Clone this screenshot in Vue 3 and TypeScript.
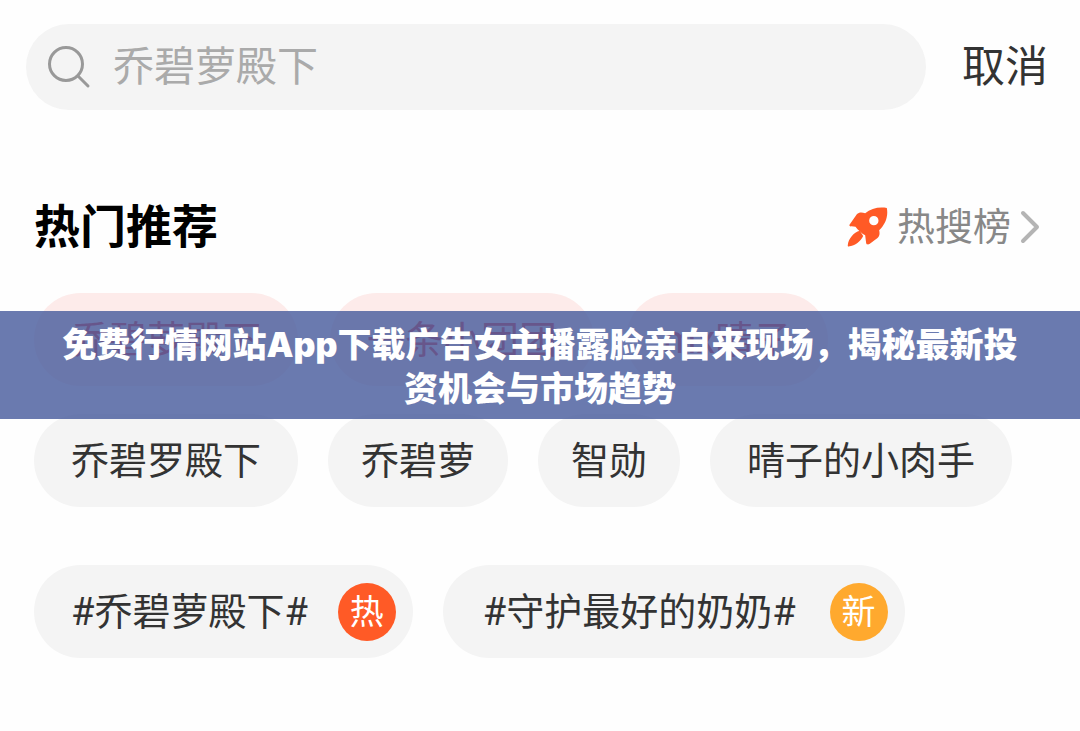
<script setup lang="ts">
interface Topic {
  label: string
  size?: 'compact' | 'roomy'
  badge?: string
  tone?: 'hot' | 'fresh'
}

const featured: Topic[] = [{ label: '乔碧萝殿下' }, { label: '一条小团团' }, { label: 'mx晴子' }]
const related: Topic[] = [
  { label: '乔碧罗殿下' },
  { label: '乔碧萝', size: 'compact' },
  { label: '智勋', size: 'compact' },
  { label: '晴子的小肉手' },
]
const hashtags: Topic[] = [
  { label: '#乔碧萝殿下#', badge: '热', tone: 'hot' },
  { label: '#守护最好的奶奶#', size: 'roomy', badge: '新', tone: 'fresh' },
]
</script>

<template>
  <main class="page">
    <form class="search" @submit.prevent>
      <label class="field">
        <svg class="lens" viewBox="0 0 44 44" aria-hidden="true">
          <circle cx="19" cy="19" r="16.5" />
          <path d="M31 31 41 41" />
        </svg>
        <input type="search" aria-label="搜索" placeholder="乔碧萝殿下" />
      </label>
      <button class="cancel" type="button">取消</button>
    </form>

    <header class="heading">
      <h2>热门推荐</h2>
      <a class="ranking" href="#ranking">
        <svg class="rocket" viewBox="80 80 122 120" aria-hidden="true">
          <path
            fill-rule="evenodd"
            d="M199 83C174 79 151 85 134 99C123 95 115 96 109 102L87 133C86 137 88 139 93 138L105 139C112 148 124 160 134 165L137 189C139 194 144 193 148 190L171 173C178 167 178 158 176 150C194 132 204 110 199 83ZM160 107A14 14 0 1 0 160 135A14 14 0 1 0 160 107Z"
          />
          <path d="M118 151C99 155 84 176 82 193C81 198 83 199 88 198C106 195 120 183 128 167Z" />
        </svg>
        <span>热搜榜</span>
        <svg class="chevron" viewBox="0 0 20 34" aria-hidden="true">
          <path d="M3 3 17 17 3 31" />
        </svg>
      </a>
    </header>

    <div class="cloud">
      <div class="row featured">
        <button v-for="t in featured" :key="t.label" class="pill" type="button">{{ t.label }}</button>
      </div>
      <div class="row related">
        <button v-for="t in related" :key="t.label" class="pill" :class="t.size" type="button">
          {{ t.label }}
        </button>
      </div>
      <div class="row">
        <button v-for="t in hashtags" :key="t.label" class="pill tagged" :class="t.size" type="button">
          <span>{{ t.label }}</span>
          <span class="badge" :class="t.tone">{{ t.badge }}</span>
        </button>
      </div>
      <h1 class="banner">免费行情网站App下载广告女主播露脸亲自来现场，揭秘最新投资机会与市场趋势</h1>
    </div>
  </main>
</template>

<style>
body {
  margin: 0;
  background: #fefefe;
}
</style>

<style scoped>
.page {
  font-family: Roboto, 'Noto Sans CJK SC', sans-serif;
  color: #333;
  padding-top: 24px;
}
button,
input {
  box-sizing: border-box;
  font: inherit;
  color: inherit;
  border: 0;
  background: none;
  padding: 0;
}
.search {
  display: flex;
  align-items: center;
  gap: 36px;
  padding: 0 32px 0 26px;
}
.field {
  flex: 1;
  min-width: 0;
  height: 86px;
  display: flex;
  align-items: center;
  gap: 22px;
  padding: 0 21px;
  border-radius: 43px;
  background: #f4f4f4;
}
.lens {
  width: 44px;
  height: 44px;
  flex: none;
  fill: none;
  stroke: #999;
  stroke-width: 3;
  stroke-linecap: round;
}
.field input {
  flex: 1;
  min-width: 0;
  height: 68px;
  font-size: 41px;
  outline: none;
  appearance: none;
}
.field input::placeholder {
  color: #aaa;
  opacity: 1;
}
.cancel {
  font-size: 43px;
  line-height: 60px;
}
.heading {
  display: flex;
  align-items: center;
  justify-content: space-between;
  height: 64px;
  margin-top: 85px;
  padding: 0 40px 0 34px;
}
.heading h2 {
  margin: 0;
  font-size: 46px;
  font-weight: 700;
  line-height: 64px;
  color: #000;
}
.ranking {
  display: flex;
  align-items: center;
  font-size: 38px;
  line-height: 56px;
  color: #888;
  text-decoration: none;
}
.rocket {
  width: 41px;
  height: 40px;
  margin-right: 9px;
  fill: #ff5a26;
}
.chevron {
  width: 20px;
  height: 34px;
  margin-left: 9px;
  fill: none;
  stroke: #b4b4b4;
  stroke-width: 4;
  stroke-linecap: round;
  stroke-linejoin: round;
}
.cloud {
  position: relative;
  display: flex;
  flex-direction: column;
  margin-top: 34px;
  padding-left: 34px;
}
.row {
  display: flex;
  gap: 30px;
}
.row.featured {
  gap: 32px;
}
.related {
  margin: 28px 0 58px;
}
.pill {
  height: 93px;
  padding: 0 37px;
  border-radius: 47px;
  background: #f4f4f4;
  font-size: 38px;
  line-height: 56px;
  white-space: nowrap;
}
.compact {
  padding: 0 33px;
}
.featured .pill {
  background: #fdebea;
  color: #ee3a3a;
}
.tagged {
  display: flex;
  align-items: center;
  gap: 30px;
  padding: 0 17px 0 37px;
}
.tagged.roomy {
  gap: 34px;
  padding-left: 40px;
}
.badge {
  width: 58px;
  height: 58px;
  border-radius: 50%;
  color: #fff;
  font-size: 34px;
  line-height: 58px;
  text-align: center;
}
.hot {
  background: #ff5a26;
}
.fresh {
  background: #ffa92e;
}
.banner {
  position: absolute;
  top: 18px;
  left: 0;
  right: 0;
  box-sizing: border-box;
  margin: 0;
  padding: 12px 54px 8px;
  background: rgba(73, 93, 157, 0.82);
  color: #fff;
  font-family: Inter, 'Noto Sans CJK SC', sans-serif;
  font-size: 34px;
  font-weight: 900;
  line-height: 44px;
  text-align: center;
}
</style>
